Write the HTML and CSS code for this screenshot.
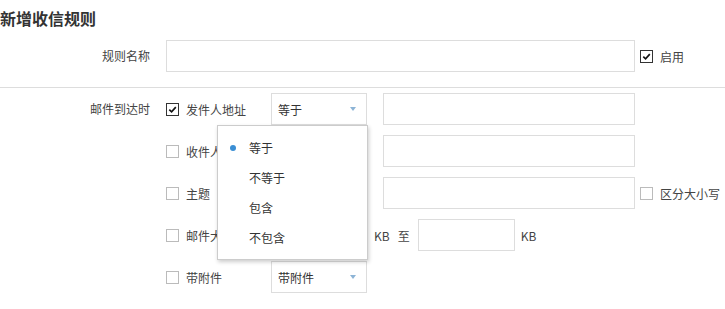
FILE: index.html
```html
<!DOCTYPE html>
<html lang="zh-CN">
<head>
    <meta charset="UTF-8">
    <meta name="viewport" content="width=device-width, initial-scale=1.0">
    <title>新增收信规则</title>
    <link rel="stylesheet" href="styles.css">
</head>
<body>
    <h2 class="title">新增收信规则</h2>

    <div class="form-row">
        <label class="form-label">规则名称</label>
        <input type="text" class="text-input name-input">
        <span class="check checked"><svg viewBox="0 0 12 12"><path d="M2.5 6.2 L5 8.6 L9.6 3.4" /></svg></span>
        <span class="check-text">启用</span>
    </div>

    <div class="divider"></div>

    <div class="form-row conditions">
        <label class="form-label">邮件到达时</label>
        <div class="cond-list">
            <div class="cond">
                <span class="check checked"><svg viewBox="0 0 12 12"><path d="M2.5 6.2 L5 8.6 L9.6 3.4" /></svg></span>
                <span class="cond-name">发件人地址</span>
                <div class="select">
                    <span>等于</span><i class="arrow"></i>
                    <ul class="menu">
                        <li class="active">等于</li>
                        <li>不等于</li>
                        <li>包含</li>
                        <li>不包含</li>
                    </ul>
                </div>
                <input type="text" class="text-input value-input">
            </div>
            <div class="cond">
                <span class="check"></span>
                <span class="cond-name">收件人地址</span>
                <div class="select"><span>等于</span><i class="arrow"></i></div>
                <input type="text" class="text-input value-input">
            </div>
            <div class="cond">
                <span class="check"></span>
                <span class="cond-name">主题</span>
                <div class="select"><span>包含</span><i class="arrow"></i></div>
                <input type="text" class="text-input value-input">
                <span class="check"></span>
                <span class="check-text">区分大小写</span>
            </div>
            <div class="cond">
                <span class="check"></span>
                <span class="cond-name">邮件大小</span>
                <input type="text" class="text-input size-input">
                <span class="unit">KB</span>
                <span class="unit-to">至</span>
                <input type="text" class="text-input size-input">
                <span class="unit">KB</span>
            </div>
            <div class="cond">
                <span class="check"></span>
                <span class="cond-name">带附件</span>
                <div class="select"><span>带附件</span><i class="arrow"></i></div>
            </div>
        </div>
    </div>
</body>
</html>
```

FILE: styles.css
```css
body {
    margin: 0;
    font-family: "Noto Sans CJK SC", "Microsoft YaHei", sans-serif;
    font-size: 12px;
    color: #444;
    background: #fff;
}
.title {
    margin: 0;
    padding: 6px 0 0 0;
    height: 34px;
    line-height: 24px;
    font-size: 16px;
    font-weight: bold;
    color: #333;
}
.form-row {
    display: flex;
    align-items: center;
}
.form-label {
    width: 150px;
    padding-right: 16px;
    text-align: right;
    line-height: 32px;
    flex-shrink: 0;
}
.text-input {
    box-sizing: border-box;
    height: 32px;
    border: 1px solid #ddd;
    padding: 0 8px;
    margin: 0;
    outline: none;
    font: inherit;
}
.name-input {
    width: 469px;
    margin-right: 5px;
}
.divider {
    border-top: 1px solid #ddd;
    margin-top: 15px;
}
.conditions {
    align-items: flex-start;
    margin-top: 5px;
}
.cond-list {
    display: flex;
    flex-direction: column;
    gap: 10px;
}
.cond {
    display: flex;
    align-items: center;
    height: 32px;
}
.check {
    box-sizing: border-box;
    width: 13px;
    height: 13px;
    border: 1px solid #bbb;
    background: #fff;
    flex-shrink: 0;
    display: inline-flex;
}
.check.checked {
    border-color: #333;
}
.check svg {
    width: 11px;
    height: 11px;
    fill: none;
    stroke: #111;
    stroke-width: 1.8;
}
.check-text {
    margin-left: 7px;
}
.cond-name {
    width: 85px;
    margin-left: 7px;
}
.select {
    position: relative;
    box-sizing: border-box;
    width: 96px;
    height: 32px;
    border: 1px solid #ddd;
    padding: 0 10px 0 6px;
    display: flex;
    align-items: center;
    justify-content: space-between;
    color: #333;
}
.arrow {
    width: 0;
    height: 0;
    border-left: 3.5px solid transparent;
    border-right: 3.5px solid transparent;
    border-top: 4px solid #8db4d6;
}
.value-input {
    width: 252px;
    margin-left: 16px;
    margin-right: 5px;
}
.size-input {
    width: 97px;
}
.unit {
    margin: 0 6px;
}
.unit-to {
    margin: 0 8px 0 2px;
}
.menu {
    position: absolute;
    left: -55px;
    top: 31px;
    width: 151px;
    box-sizing: border-box;
    margin: 0;
    padding: 7px 0 6px 0;
    list-style: none;
    background: #fff;
    border: 1px solid #ccc;
    box-shadow: 1px 2px 4px rgba(0, 0, 0, 0.2);
    z-index: 10;
}
.menu li {
    position: relative;
    height: 30px;
    line-height: 30px;
    padding-left: 31px;
    color: #333;
}
.menu li.active::before {
    content: "";
    position: absolute;
    left: 12px;
    top: 12px;
    width: 6px;
    height: 6px;
    border-radius: 50%;
    background: #3a8ed4;
}
```
